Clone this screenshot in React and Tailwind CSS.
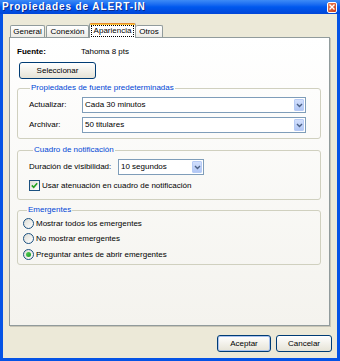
import React from "react";

function Chevron() {
  return (
    <svg width="7" height="5" viewBox="0 0 7 5">
      <path d="M1 1 L3.5 3.5 L6 1" fill="none" stroke="#4d6185" strokeWidth="1.4" />
    </svg>
  );
}

function Select({ value, className }) {
  return (
    <div className={`flex items-center h-[16px] border border-[#7f9db9] bg-white ${className}`}>
      <span className="flex-1 pl-[2px] leading-[10px] whitespace-nowrap overflow-hidden">{value}</span>
      <div className="w-[10px] h-[12px] mr-[1px] rounded-[1px] border border-[#b7cbf5] bg-gradient-to-b from-[#d2dffc] to-[#b2c7f5] flex items-center justify-center">
        <Chevron />
      </div>
    </div>
  );
}

function Group({ title, legendClass, className, children }) {
  return (
    <fieldset className={`w-[304px] border border-[#d0d0bf] rounded-[3px] ${className}`}>
      <legend className={`px-[1px] text-[#0046d5] leading-[10px] ${legendClass}`}>{title}</legend>
      {children}
    </fieldset>
  );
}

function Radio({ checked, label, className = "" }) {
  return (
    <div className={`flex items-center h-[11px] ${className}`}>
      <div className="w-[11px] h-[11px] rounded-full border border-[#1c5180] bg-gradient-to-br from-[#dcdcd5] to-white flex items-center justify-center">
        {checked && <div className="w-[5px] h-[5px] rounded-full bg-gradient-to-br from-[#55d35a] to-[#1a9a1e]" />}
      </div>
      <span className="ml-[2px] leading-[10px]">{label}</span>
    </div>
  );
}

function XPButton({ children, className = "", def = false }) {
  return (
    <div
      className={`h-[17px] rounded-[3px] border border-[#003c74] bg-gradient-to-b from-white to-[#e6e3d6] flex items-center justify-center leading-[10px] ${
        def ? "shadow-[inset_0_0_0_1px_#a9c2ee]" : ""
      } ${className}`}
    >
      {children}
    </div>
  );
}

export default function App() {
  return (
    <div className="w-[340px] h-[361px] flex flex-col bg-[#0553e5] text-black text-[8px] leading-[10px] font-['Liberation_Sans',Arial,sans-serif]">
      {/* Title bar */}
      <div className="h-[14px] flex items-center justify-between pl-[2px] pr-[3px] bg-gradient-to-b from-[#3d8bf6] via-[#0058ee] to-[#0146d8]">
        <span className="text-white font-bold text-[10px] tracking-[0.9px] leading-[12px] [text-shadow:1px_1px_0_#0b2b8f] whitespace-nowrap">
          Propiedades de ALERT-IN
        </span>
        <div className="w-[10px] h-[11px] rounded-[2px] border border-white bg-gradient-to-br from-[#ec8058] to-[#c83c14] flex items-center justify-center">
          <svg width="6" height="6" viewBox="0 0 6 6">
            <path d="M0.5 0.5 L5.5 5.5 M5.5 0.5 L0.5 5.5" stroke="white" strokeWidth="1.4" />
          </svg>
        </div>
      </div>

      {/* Client area */}
      <div className="flex-1 mx-[3px] mb-[3px] bg-[#ece9d8] flex flex-col">
        {/* Tabs */}
        <div className="mt-[9px] h-[15px] pl-[7px] flex items-end relative z-10">
          <div className="w-[35px] h-[12px] mb-[1px] border-t border-l border-r border-[#919b9c] rounded-t-[2px] bg-gradient-to-b from-white to-[#ecebe6] flex items-center justify-center">
            General
          </div>
          <div className="ml-[1px] w-[43px] h-[12px] mb-[1px] border-t border-l border-r border-[#919b9c] rounded-t-[2px] bg-gradient-to-b from-white to-[#ecebe6] flex items-center justify-center">
            Conexión
          </div>
          <div className="w-[47px] h-[15px] border-l border-r border-[#919b9c] rounded-t-[2px] bg-white flex flex-col">
            <div className="h-[1px] bg-[#e68b2c] rounded-t-[2px]" />
            <div className="h-[1px] bg-[#ffc73c]" />
            <div className="flex-1 mx-[1px] mt-[1px] mb-[1px] border border-dotted border-black flex items-center justify-center">
              Apariencia
            </div>
          </div>
          <div className="w-[27px] h-[12px] mb-[1px] border-t border-r border-[#919b9c] rounded-t-[2px] bg-gradient-to-b from-white to-[#ecebe6] flex items-center justify-center">
            Otros
          </div>
        </div>

        {/* Panel */}
        <div className="ml-[6px] -mt-[1px] w-[321px] h-[289px] border border-[#919b9c] shadow-[1px_1px_0_#c8c5b6] bg-gradient-to-b from-white to-[#f4f3ee] pl-[7px] pt-[9px] flex flex-col">
          <div className="flex h-[10px] items-center">
            <span className="w-[64px] font-bold">Fuente:</span>
            <span>Tahoma 8 pts</span>
          </div>
          <XPButton className="mt-[5px] ml-[2px] w-[77px]">Seleccionar</XPButton>

          <Group title="Propiedades de fuente predeterminadas" legendClass="ml-[1px]" className="mt-[4px] pt-[4px] pb-[5px] pl-[11px]">
            <div className="flex items-center">
              <span className="w-[53px]">Actualizar:</span>
              <Select value="Cada 30 minutos" className="w-[224px]" />
            </div>
            <div className="flex items-center mt-[4px]">
              <span className="w-[53px]">Archivar:</span>
              <Select value="50 titulares" className="w-[224px]" />
            </div>
          </Group>

          <Group title="Cuadro de notificación" legendClass="ml-[4px]" className="mt-[6px] pt-[4px] pb-[8px] pl-[11px]">
            <div className="flex items-center">
              <span className="w-[89px]">Duración de visibilidad:</span>
              <Select value="10 segundos" className="w-[86px]" />
            </div>
            <div className="flex items-center h-[11px] mt-[5px]">
              <div className="w-[11px] h-[11px] border border-[#1c5180] bg-gradient-to-br from-[#dcdcd5] to-white flex items-center justify-center">
                <svg width="7" height="7" viewBox="0 0 7 7">
                  <path d="M0.8 3.4 L2.7 5.3 L6.2 1.3" fill="none" stroke="#21a121" strokeWidth="1.6" />
                </svg>
              </div>
              <span className="ml-[2px]">Usar atenuación en cuadro de notificación</span>
            </div>
          </Group>

          <Group title="Emergentes" legendClass="ml-[4px]" className="mt-[5px] pt-[3px] pb-[4px] pl-[5px]">
            <Radio label="Mostrar todos los emergentes" />
            <Radio label="No mostrar emergentes" className="mt-[4px]" />
            <Radio label="Preguntar antes de abrir emergentes" checked className="mt-[5px]" />
          </Group>
        </div>

        {/* Buttons */}
        <div className="mt-[9px] flex justify-end gap-[5px] pr-[5px]">
          <XPButton def className="w-[54px]">Aceptar</XPButton>
          <XPButton className="w-[56px]">Cancelar</XPButton>
        </div>
      </div>
    </div>
  );
}
